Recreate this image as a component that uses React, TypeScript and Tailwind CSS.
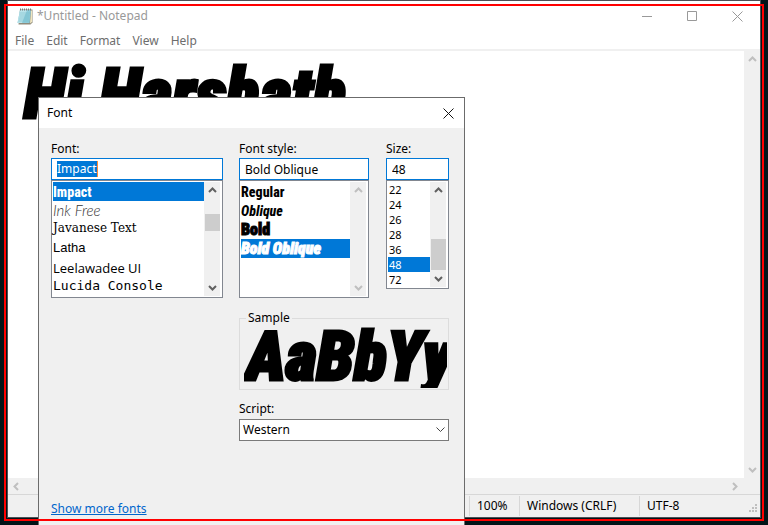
import { useState, type ReactNode } from "react";

const impact =
  "font-['Impact','Roboto_Condensed','Liberation_Sans_Narrow','Open_Sans_Condensed','DejaVu_Sans_Condensed',sans-serif]";

function Chevron({ dir, color }: { dir: "up" | "down" | "left" | "right"; color: string }) {
  const paths = { up: "M1 6 4.500 2.500 8 6", down: "M1 3 4.500 6.500 8 3", left: "M6 1 2.500 4.500 6 8", right: "M3 1 6.500 4.500 3 8" };
  return (
    <svg width="9" height="9" viewBox="0 0 9 9" fill="none" stroke={color} strokeWidth="2" aria-hidden="true">
      <path d={paths[dir]} />
    </svg>
  );
}

function ScrollBar({ color = "#606060", children, className = "" }: { color?: string; children?: ReactNode; className?: string }) {
  return (
    <div className={"flex w-4 shrink-0 flex-col items-center justify-between bg-[#f0f0f0] py-1 " + className}>
      <Chevron dir="up" color={color} />
      {children}
      <Chevron dir="down" color={color} />
    </div>
  );
}

function Notebook() {
  return (
    <svg width="16" height="17" viewBox="0 0 16 17" aria-hidden="true">
      <path d="M3 1.500h12.500v13l-2 2H1.500z" fill="#8f8b7c" />
      <path d="M14 2.500h1v11.500l-2 1.500z" fill="#f0e6c0" />
      <path d="M3 2h11l-1.500 13H.5z" fill="#8ccbd9" />
      <path d="M3 2h7L5 15H.5z" fill="#b9e3ea" />
      <path d="M3 5h10M2.500 7h10M2.500 9h10M2 11h10.500M1.500 13h11" stroke="#6fb4c4" strokeWidth=".5" />
      <path d="M3.500.5v2M5.500.5v2M7.500.5v2M9.500.5v2M11.500.5v2M13.500.5v2" stroke="#777" />
    </svg>
  );
}

const fonts = [
  { name: "Impact", row: "h-[19px]", face: impact + " text-[14px] font-extrabold" },
  { name: "Ink Free", row: "h-[18px]", face: "font-['Ink_Free','Lato',cursive] text-[15px] font-light italic text-[#333]" },
  { name: "Javanese Text", row: "h-[18px]", face: "font-['Javanese_Text','DejaVu_Serif',serif] text-[12px]" },
  { name: "Latha", row: "h-[22px]", face: "font-['Latha','Liberation_Sans',sans-serif] text-[13px]" },
  { name: "Leelawadee UI", row: "h-[18px]", face: "font-['Leelawadee_UI','Open_Sans',sans-serif] text-[13px]" },
  { name: "Lucida Console", row: "h-[18px]", face: "font-['Lucida_Console','DejaVu_Sans_Mono',monospace] text-[13px]" },
];

const styles = [
  { name: "Regular", face: "text-[14px] font-extrabold" },
  { name: "Oblique", face: "text-[14px] font-extrabold italic" },
  { name: "Bold", face: "text-[16px] font-black [-webkit-text-stroke:1px]" },
  { name: "Bold Oblique", face: "text-[16px] font-black italic [-webkit-text-stroke:1px]" },
];

const sizes = ["22", "24", "26", "28", "36", "48", "72"];

const listBox = "flex border border-[#828790] bg-white p-px pr-0.5";
const field = "h-[22px] w-full border border-[#0078d7] bg-white px-[5px] outline-none";

function FontDialog() {
  const [font, setFont] = useState("Impact");
  const [style, setStyle] = useState("Bold Oblique");
  const [size, setSize] = useState("48");
  return (
    <section role="dialog" aria-labelledby="dialog-title" className="absolute top-[97px] left-[38px] w-[427px] border border-[#6b6b6b] bg-[#f0f0f0] pb-12 text-black">
      <header className="flex h-[30px] items-center justify-between bg-white pr-2.5 pl-2">
        <h2 id="dialog-title">Font</h2>
        <button aria-label="Close">
          <svg width="11" height="11" viewBox="0 0 11 11" stroke="#111" aria-hidden="true"><path d="M.5.5l10 10M10.500.5l-10 10" /></svg>
        </button>
      </header>
      <div className="pt-3 pr-[15px] pl-3">
        <div className="flex items-start gap-4">
          <div className="w-[172px]">
            <label htmlFor="font" className="block h-[18px] leading-[18px]">Font:</label>
            <div className="flex h-[22px] items-center border border-[#0078d7] bg-white px-[5px]">
              <input id="font" value={font} onChange={(e) => setFont(e.target.value)} className="h-4 w-[41px] border-r border-[#ff8c32] bg-[#0078d7] text-white outline-none" />
            </div>
            <div className={listBox + " h-[118px]"}>
              <ul role="listbox" aria-label="Font" className="min-w-0 flex-1">
                {fonts.map((f) => (
                  <li key={f.name} role="option" aria-selected={f.name === font} onClick={() => setFont(f.name)}
                    className={"flex items-center whitespace-nowrap " + f.row + " " + f.face + (f.name === font ? " bg-[#0078d7] text-white" : "")}>
                    {f.name}
                  </li>
                ))}
              </ul>
              <ScrollBar><div className="mb-[34px] h-[17px] w-[15px] bg-[#cdcdcd]" /></ScrollBar>
            </div>
          </div>
          <div className="w-[130px]">
            <label htmlFor="style" className="block h-[18px] leading-[18px]">Font style:</label>
            <input id="style" value={style} onChange={(e) => setStyle(e.target.value)} className={field} />
            <div className={listBox + " h-[118px]"}>
              <ul role="listbox" aria-label="Font style" className="min-w-0 flex-1">
                {styles.map((s) => (
                  <li key={s.name} role="option" aria-selected={s.name === style} onClick={() => setStyle(s.name)}
                    className={"flex h-[19px] items-center whitespace-nowrap " + impact + " " + s.face + (s.name === style ? " bg-[#0078d7] text-white" : "")}>
                    {s.name}
                  </li>
                ))}
              </ul>
              <ScrollBar color="#bfbfbf" />
            </div>
          </div>
          <div className="ml-auto w-[63px]">
            <label htmlFor="size" className="block h-[18px] leading-[18px]">Size:</label>
            <input id="size" value={size} onChange={(e) => setSize(e.target.value)} className={field} />
            <div className={listBox + " h-[109px]"}>
              <ul role="listbox" aria-label="Size" className="min-w-0 flex-1 text-[11px]">
                {sizes.map((s) => (
                  <li key={s} role="option" aria-selected={s === size} onClick={() => setSize(s)}
                    className={"h-[15px] px-px leading-[15px] " + (s === size ? "bg-[#0078d7] text-white" : "")}>
                    {s}
                  </li>
                ))}
              </ul>
              <ScrollBar><div className="mt-10 h-[31px] w-[15px] bg-[#cdcdcd]" /></ScrollBar>
            </div>
          </div>
        </div>
        <div className="ml-auto w-[210px] pt-3">
          <fieldset className="h-[80px] min-w-0 border border-[#dcdcdc] pr-px pl-1">
            <legend className="ml-0.5 px-0.5 leading-4">Sample</legend>
            <div className={"h-[62px] overflow-hidden pl-0.5 text-[68px] leading-[62px] font-black whitespace-nowrap italic [-webkit-text-stroke:3px] " + impact}>AaBbYyZz</div>
          </fieldset>
          <label htmlFor="script" className="mt-2.5 block h-[19px] leading-[18px]">Script:</label>
          <div className="grid items-center">
            <select id="script" className="col-start-1 row-start-1 h-[22px] w-full appearance-none border border-[#7a7a7a] bg-white px-[3px] outline-none">
              <option>Western</option>
            </select>
            <svg width="9" height="6" viewBox="0 0 9 6" fill="none" stroke="#444" className="pointer-events-none col-start-1 row-start-1 mr-1 justify-self-end" aria-hidden="true"><path d="M.5.5l4 4 4-4" /></svg>
          </div>
        </div>
        <a href="#more-fonts" className="mt-[60px] inline-block leading-4 text-[#0066cc] underline">Show more fonts</a>
      </div>
    </section>
  );
}

export default function App() {
  return (
    <main className="relative h-screen overflow-hidden bg-[#021418] font-['Segoe_UI','Noto_Sans',sans-serif] text-[12px] leading-4">
      <section aria-label="Notepad" className="absolute top-0 right-[7px] bottom-[7px] left-[7px] flex flex-col border border-[#4d4f55] bg-white">
        <header className="flex h-[30px] shrink-0 items-center pr-[17px] pl-[9px] text-[#999]">
          <Notebook />
          <h1 className="ml-1 flex-1">*Untitled - Notepad</h1>
          <div className="flex items-center gap-[34px]">
            <button aria-label="Minimize"><svg width="11" height="11" viewBox="0 0 11 11" stroke="#999"><path d="M0 5.500h10" /></svg></button>
            <button aria-label="Maximize"><svg width="11" height="11" viewBox="0 0 11 11" fill="none" stroke="#999"><path d="M.5.5h9v9h-9z" /></svg></button>
            <button aria-label="Close window"><svg width="11" height="11" viewBox="0 0 11 11" stroke="#999"><path d="M.5.5l10 10M10.500.5l-10 10" /></svg></button>
          </div>
        </header>
        <nav className="flex h-5 shrink-0 items-center gap-3 border-b-2 border-[#f0f0f0] pt-0.5 pl-[7px] text-[#6d6d6d]">
          <button>File</button><button>Edit</button><button>Format</button><button>View</button><button>Help</button>
        </nav>
        <div className="flex min-h-0 flex-1">
          <textarea aria-label="Document" defaultValue="Hi Harshath" className={"flex-1 resize-none overflow-hidden px-4 pt-1 text-[70px] leading-[78px] font-black text-black italic outline-none [-webkit-text-stroke:3px] " + impact} />
          <ScrollBar color="#bfbfbf" />
        </div>
        <div className="flex h-4 shrink-0 items-center justify-between bg-[#f0f0f0] pr-[21px] pl-1">
          <Chevron dir="left" color="#bfbfbf" />
          <Chevron dir="right" color="#bfbfbf" />
        </div>
        <footer className="flex h-[23px] shrink-0 justify-end border-t border-[#d7d7d7] bg-[#f0f0f0] py-px text-black">
          <div className="flex w-[50px] items-center border-l border-[#d7d7d7] pl-[7px]">100%</div>
          <div className="flex w-[120px] items-center border-l border-[#d7d7d7] pl-[7px]">Windows (CRLF)</div>
          <div className="flex w-[121px] items-center justify-between border-l border-[#d7d7d7] pl-[7px]">
            <span>UTF-8</span>
            <svg width="11" height="11" viewBox="0 0 11 11" fill="#bfbfbf" className="mt-1.5" aria-hidden="true"><path d="M6 0h2v2H6zM3 3h2v2H3zM6 3h2v2H6zM0 6h2v2H0zM3 6h2v2H3zM6 6h2v2H6z" /></svg>
          </div>
        </footer>
      </section>
      <FontDialog />
      <div className="pointer-events-none absolute top-1 right-1 bottom-1 left-1 border-2 border-[#ff0000]" />
    </main>
  );
}
